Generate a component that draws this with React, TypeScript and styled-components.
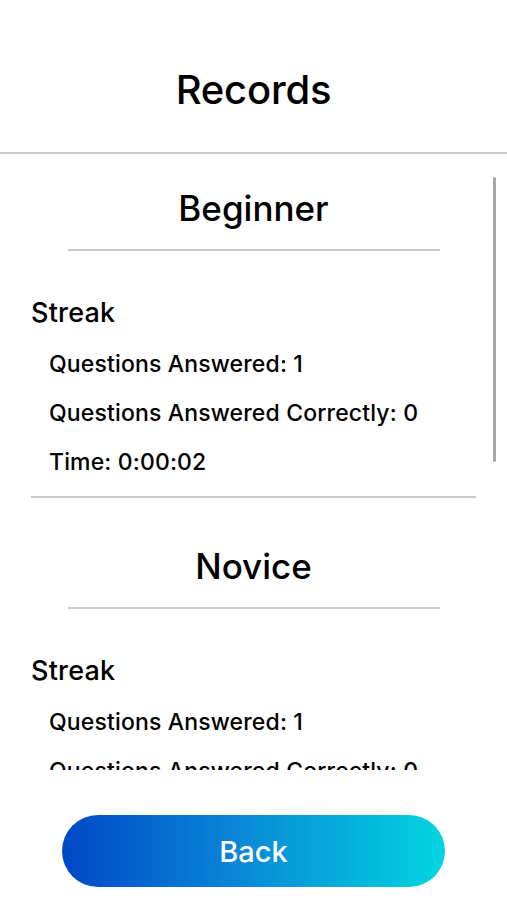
import styled, { createGlobalStyle } from 'styled-components';

type Stat = { label: string; value: string };

type Level = {
  name: string;
  group: string;
  stats: Stat[];
};

const LEVELS: Level[] = [
  {
    name: 'Beginner',
    group: 'Streak',
    stats: [
      { label: 'Questions Answered', value: '1' },
      { label: 'Questions Answered Correctly', value: '0' },
      { label: 'Time', value: '0:00:02' },
    ],
  },
  {
    name: 'Novice',
    group: 'Streak',
    stats: [
      { label: 'Questions Answered', value: '1' },
      { label: 'Questions Answered Correctly', value: '0' },
      { label: 'Time', value: '0:00:03' },
    ],
  },
];

const GlobalStyle = createGlobalStyle`
  html,
  body {
    margin: 0;
    padding: 0;
    background: #ffffff;
  }

  body {
    font-family: Inter, "Noto Sans", "Liberation Sans", sans-serif;
    color: #000000;
  }
`;

export default function App() {
  return (
    <>
      <GlobalStyle />
      <Screen>
        <Header>
          <Title>Records</Title>
        </Header>

        <ScrollArea>
          <ScrollContent>
            {LEVELS.map((level) => (
              <Section key={level.name}>
                <LevelName>{level.name}</LevelName>
                <LevelRule />
                <GroupTitle>{level.group}</GroupTitle>
                <StatList>
                  {level.stats.map((stat) => (
                    <StatRow key={stat.label}>
                      {stat.label}: {stat.value}
                    </StatRow>
                  ))}
                </StatList>
                <SectionRule />
              </Section>
            ))}
          </ScrollContent>
          <ScrollThumb aria-hidden="true" />
        </ScrollArea>

        <Footer>
          <BackButton type="button">Back</BackButton>
        </Footer>
      </Screen>
    </>
  );
}

const Screen = styled.div`
  display: flex;
  flex-direction: column;
  width: 507px;
  height: 900px;
  overflow: hidden;
`;

const Header = styled.header`
  display: flex;
  flex-shrink: 0;
  align-items: center;
  justify-content: center;
  height: 154px;
  padding-top: 26px;
  box-sizing: border-box;
  border-bottom: 2px solid #c9c9c9;
`;

const Title = styled.h1`
  margin: 0;
  font-size: 40px;
  font-weight: 500;
  letter-spacing: -0.2px;
`;

const ScrollArea = styled.div`
  position: relative;
  flex-shrink: 0;
  height: 616px;
  overflow: hidden;
`;

const ScrollContent = styled.div`
  margin-top: -14px;
  padding: 0 31px;
`;

const Section = styled.section`
  display: flex;
  flex-direction: column;
  padding-top: 46px;
`;

const LevelName = styled.h2`
  margin: 0;
  height: 44px;
  line-height: 44px;
  text-align: center;
  font-size: 35px;
  font-weight: 500;
`;

const LevelRule = styled.div`
  align-self: center;
  width: 372px;
  height: 2px;
  margin-top: 19px;
  background: #c9c9c9;
`;

const GroupTitle = styled.h3`
  margin: 46px 0 0;
  line-height: 32px;
  font-size: 27px;
  font-weight: 500;
  letter-spacing: 0.2px;
`;

const StatList = styled.div`
  display: flex;
  flex-direction: column;
  margin-top: 11px;
  padding-left: 18px;
`;

const StatRow = styled.p`
  margin: 0;
  line-height: 49px;
  font-size: 23px;
  font-weight: 500;
  letter-spacing: 0.15px;
  white-space: nowrap;
`;

const SectionRule = styled.div`
  height: 2px;
  margin-top: 9px;
  background: #c9c9c9;
`;

const ScrollThumb = styled.div`
  position: absolute;
  top: 23px;
  right: 11px;
  width: 3px;
  height: 285px;
  border-radius: 2px;
  background: #a8a8a8;
`;

const Footer = styled.footer`
  display: flex;
  justify-content: center;
  padding-top: 45px;
`;

const BackButton = styled.button`
  width: 383px;
  height: 72px;
  border: 0;
  border-radius: 36px;
  background: linear-gradient(90deg, #0047c6 0%, #0a86d6 45%, #00d6e0 100%);
  color: #ffffff;
  font-family: Inter, "Noto Sans", "Liberation Sans", sans-serif;
  font-size: 29px;
  font-weight: 500;
  cursor: pointer;
`;
